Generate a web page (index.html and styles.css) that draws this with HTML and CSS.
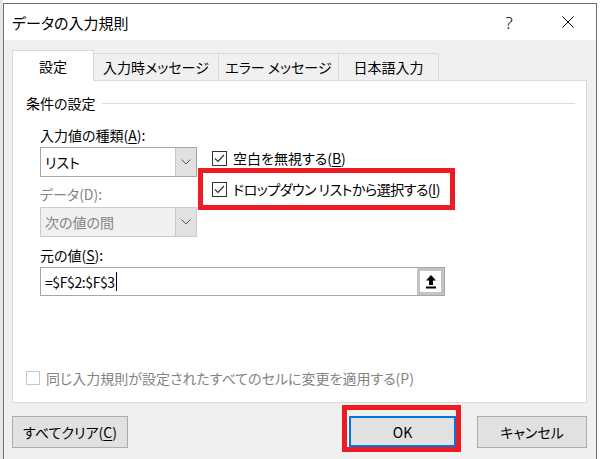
FILE: index.html
```html
<!DOCTYPE html>
<html lang="ja">
<head>
    <meta charset="UTF-8">
    <title>データの入力規則</title>
    <link rel="stylesheet" href="styles.css">
</head>
<body>

<div class="dialog">
    <div class="titlebar">
        <span class="title">データの入力規則</span>
        <span class="tb-btn help">?</span>
        <span class="tb-btn close">
            <svg width="12" height="12" viewBox="0 0 12 12"><path d="M0.5 0.5 L11.5 11.5 M11.5 0.5 L0.5 11.5" stroke="#000" stroke-width="1" fill="none"/></svg>
        </span>
    </div>

    <div class="body">
        <div class="tabs">
            <div class="tab active">設定</div>
            <div class="tab">入力時メッセージ</div>
            <div class="tab">エラー メッセージ</div>
            <div class="tab">日本語入力</div>
        </div>

        <div class="panel">
            <div class="group-title"><span>条件の設定</span><span class="rule"></span></div>

            <div class="fields">
                <div class="col-left">
                    <div class="label">入力値の種類(<u>A</u>):</div>
                    <div class="combo">
                        <span class="combo-text">リスト</span>
                        <span class="combo-btn"><svg width="10" height="6" viewBox="0 0 10 6"><polyline points="0.5,0.5 5,5 9.5,0.5" stroke="#555" stroke-width="1" fill="none"/></svg></span>
                    </div>
                    <div class="label label-2 disabled">データ(D):</div>
                    <div class="combo combo-2 disabled">
                        <span class="combo-text">次の値の間</span>
                        <span class="combo-btn"><svg width="10" height="6" viewBox="0 0 10 6"><polyline points="0.5,0.5 5,5 9.5,0.5" stroke="#555" stroke-width="1" fill="none"/></svg></span>
                    </div>
                </div>
                <div class="col-right">
                    <div class="check check-blank">
                        <span class="box"><svg width="13" height="13" viewBox="0 0 13 13"><polyline points="2,6.5 5,9.5 11,3" stroke="#333" stroke-width="1.2" fill="none"/></svg></span>
                        <span>空白を無視する(<u>B</u>)</span>
                    </div>
                    <div class="highlight">
                        <div class="check tight">
                            <span class="box"><svg width="13" height="13" viewBox="0 0 13 13"><polyline points="2,6.5 5,9.5 11,3" stroke="#333" stroke-width="1.2" fill="none"/></svg></span>
                            <span>ドロップダウン リストから選択する(<u>I</u>)</span>
                        </div>
                    </div>
                </div>
            </div>

            <div class="label source-label">元の値(<u>S</u>):</div>
            <div class="ref-input">
                <span class="ref-text">=$F$2:$F$3</span>
                <span class="caret"></span>
                <span class="ref-btn">
                    <svg width="10" height="14" viewBox="0 0 10 14"><path d="M5 0 L0 5.5 L3 5.5 L3 10 L7 10 L7 5.5 L10 5.5 Z" fill="#000"/><rect x="0" y="11.5" width="10" height="2" fill="#000"/></svg>
                </span>
            </div>

            <div class="check apply disabled">
                <span class="box"></span>
                <span>同じ入力規則が設定されたすべてのセルに変更を適用する(P)</span>
            </div>
        </div>

        <div class="footer">
            <div class="btn btn-clear">すべてクリア(<u>C</u>)</div>
            <div class="highlight-ok">
                <div class="btn btn-ok">OK</div>
            </div>
            <div class="btn btn-cancel">キャンセル</div>
        </div>
    </div>
</div>

</body>
</html>
```

FILE: styles.css
```css
body {
    margin: 0;
    width: 600px;
    height: 459px;
    overflow: hidden;
    background: linear-gradient(to right, #e6e6e6 3px, #fff 3px);
    font-family: "Noto Sans CJK JP", "Noto Sans", sans-serif;
    font-size: 14px;
    font-feature-settings: "palt";
    color: #000;
}

u {
    text-underline-offset: 2px;
}

.dialog {
    box-sizing: border-box;
    width: 594px;
    height: 456px;
    margin: 3px 0 0 3px;
    border: 1px solid #707070;
    border-bottom: none;
    background: #f0f0f0;
}

.titlebar {
    display: flex;
    align-items: center;
    height: 36px;
    background: #fff;
}

.title {
    padding-left: 8px;
    font-size: 15px;
}

.tb-btn {
    display: flex;
    align-items: center;
    justify-content: center;
    width: 46px;
    height: 36px;
}

.help {
    margin-left: auto;
    margin-right: 13px;
    font-family: "Noto Sans", sans-serif;
    font-size: 17px;
    font-weight: 300;
}

.close {
    margin-right: 5px;
}

.body {
    padding: 10px 9px 0 8px;
}

/* tabs */
.tabs {
    display: flex;
    align-items: flex-end;
    height: 30px;
}

.tab {
    box-sizing: border-box;
    display: flex;
    align-items: center;
    justify-content: center;
    height: 27px;
    border: 1px solid #d9d9d9;
    border-bottom: none;
    border-left: none;
    background: #f0f0f0;
}

.tab:nth-child(1) { width: 82px; }
.tab:nth-child(2) { width: 125px; }
.tab:nth-child(3) { width: 120px; }
.tab:nth-child(4) { width: 100px; }

.tab.active {
    position: relative;
    z-index: 1;
    height: 31px;
    margin-bottom: -1px;
    border-left: 1px solid #d9d9d9;
    background: #fff;
}

.panel {
    box-sizing: border-box;
    display: flex;
    flex-direction: column;
    width: 575px;
    height: 323px;
    border: 1px solid #d9d9d9;
    background: #fff;
}

.group-title {
    display: flex;
    align-items: center;
    height: 20px;
    margin: 12px 11px 0 13px;
}

.rule {
    flex: 1;
    margin-left: 6px;
    border-top: 1px solid #dcdcdc;
}

.fields {
    display: flex;
    margin: 12px 0 0 27px;
}

.col-left {
    width: 157px;
}

.label {
    height: 20px;
    line-height: 20px;
}

.disabled {
    color: #838383;
}

.combo {
    box-sizing: border-box;
    display: flex;
    height: 30px;
    margin-top: 2px;
    border: 1px solid #a6a6a6;
    background: #fff;
}

.combo-text {
    flex: 1;
    padding-left: 4px;
    line-height: 28px;
}

.combo-btn {
    display: flex;
    align-items: center;
    justify-content: center;
    width: 20px;
    border-left: 1px solid #c8c8c8;
    background: #e1e1e1;
}

.label-2 {
    margin-top: 7px;
}

.combo-2 {
    margin-top: 3px;
    border-color: #cccccc;
    background: #f0f0f0;
}

.col-right {
    margin-left: 1px;
    padding-top: 23px;
}

.check {
    display: flex;
    align-items: center;
    gap: 6px;
    height: 20px;
    white-space: nowrap;
}

.tight {
    letter-spacing: -0.5px;
}

.box {
    box-sizing: border-box;
    display: flex;
    align-items: center;
    justify-content: center;
    width: 15px;
    height: 15px;
    border: 1px solid #333;
    background: #fff;
}

.check-blank {
    padding-left: 14px;
}

.highlight {
    box-sizing: border-box;
    display: flex;
    align-items: center;
    width: 257px;
    height: 42px;
    padding-left: 9px;
    border: 5px solid #ed1c24;
}

.source-label {
    margin: 8px 0 0 27px;
}

.ref-input {
    box-sizing: border-box;
    display: flex;
    align-items: center;
    width: 405px;
    height: 29px;
    margin: 2px 0 0 27px;
    border: 1px solid #a6a6a6;
}

.ref-text {
    padding-left: 4px;
    letter-spacing: -0.4px;
}

.caret {
    width: 1px;
    height: 19px;
    margin-left: 1px;
    background: #000;
}

.ref-btn {
    box-sizing: border-box;
    display: flex;
    align-items: center;
    justify-content: center;
    width: 27px;
    height: 27px;
    margin-left: auto;
    border: 3px solid #c3c3c3;
    background: #fff;
}

.apply {
    margin: auto 0 14px 13px;
}

.apply .box {
    width: 14px;
    height: 14px;
    border-color: #c8c8c8;
}

/* buttons */
.footer {
    display: flex;
    align-items: flex-start;
}

.btn {
    box-sizing: border-box;
    display: flex;
    align-items: center;
    justify-content: center;
    height: 32px;
    border: 1px solid #adadad;
    background: #e1e1e1;
}

.btn-clear {
    width: 116px;
    margin-top: 13px;
}

.highlight-ok {
    margin: 2px 0 0 auto;
    padding: 6px 0 0 2px;
    border: 5px solid #ed1c24;
}

.btn-ok {
    width: 107px;
    height: 31px;
    border: 2px solid #0078d7;
}

.btn-cancel {
    width: 110px;
    margin: 13px 0 0 16px;
}
```
